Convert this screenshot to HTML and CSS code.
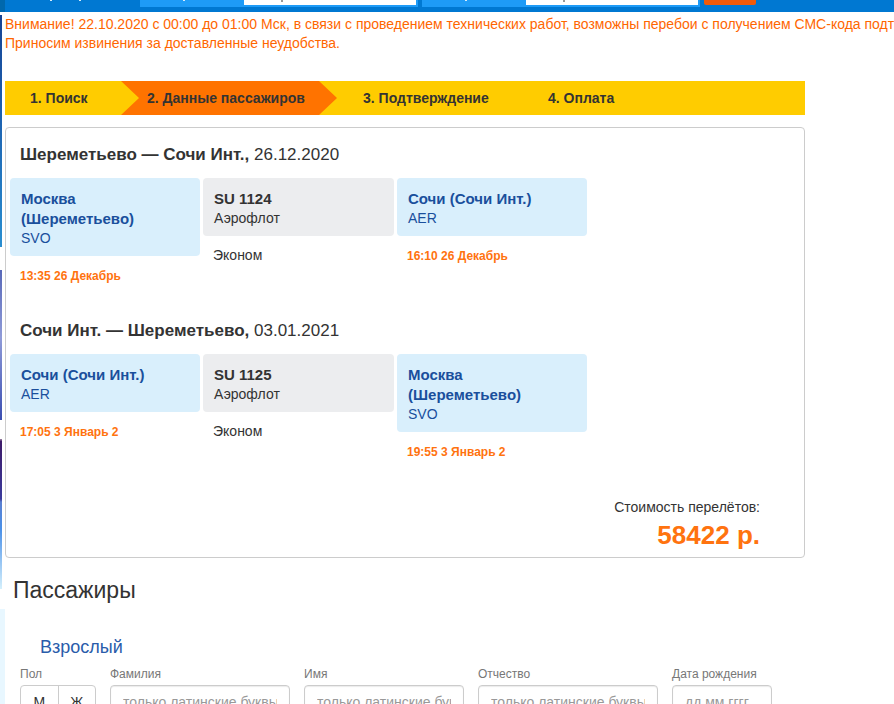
FILE: index.html
```html
<!DOCTYPE html>
<html lang="ru">
<head>
<meta charset="utf-8">
<title>Данные пассажиров</title>
<link rel="stylesheet" href="styles.css">
</head>
<body>
<header class="topbar">
  <div class="topbar-brand"><i class="mark"></i><i class="mark"></i></div>
  <div class="field"><span class="field-label"><i class="mark"></i></span><span class="field-value"><i class="mark mark-dark"></i></span></div>
  <div class="field"><span class="field-label"><i class="mark"></i></span><span class="field-value"><i class="mark mark-dark"></i></span></div>
  <span class="topbar-action"></span>
</header>
<div class="page">
  <aside class="rail">
    <div class="banner banner-sky"></div>
    <div class="banner banner-violet"></div>
    <div class="banner banner-night"></div>
    <div class="rail-end"></div>
  </aside>
  <main class="content">
    <p class="notice">Внимание! 22.10.2020 с 00:00 до 01:00 Мск, в связи с проведением технических работ, возможны перебои с получением СМС-кода подт<br>Приносим извинения за доставленные неудобства.</p>
    <ol class="steps">
      <li class="step step-search">1. Поиск</li>
      <li class="step step-current" aria-current="step">2. Данные пассажиров</li>
      <li class="step step-confirm">3. Подтверждение</li>
      <li class="step">4. Оплата</li>
    </ol>
    <section class="trip">
      <article class="flight">
        <h2 class="route"><b>Шереметьево — Сочи Инт.,</b> 26.12.2020</h2>
        <div class="legs">
          <div class="leg">
            <div class="tile"><b>Москва (Шереметьево)</b><span>SVO</span></div>
            <p class="time">13:35 26 Декабрь</p>
          </div>
          <div class="leg">
            <div class="tile tile-carrier"><b>SU 1124</b><span>Аэрофлот</span></div>
            <p class="cabin">Эконом</p>
          </div>
          <div class="leg">
            <div class="tile"><b>Сочи (Сочи Инт.)</b><span>AER</span></div>
            <p class="time">16:10 26 Декабрь</p>
          </div>
        </div>
      </article>
      <article class="flight">
        <h2 class="route"><b>Сочи Инт. — Шереметьево,</b> 03.01.2021</h2>
        <div class="legs">
          <div class="leg">
            <div class="tile"><b>Сочи (Сочи Инт.)</b><span>AER</span></div>
            <p class="time">17:05 3 Январь 2</p>
          </div>
          <div class="leg">
            <div class="tile tile-carrier"><b>SU 1125</b><span>Аэрофлот</span></div>
            <p class="cabin">Эконом</p>
          </div>
          <div class="leg">
            <div class="tile"><b>Москва (Шереметьево)</b><span>SVO</span></div>
            <p class="time">19:55 3 Январь 2</p>
          </div>
        </div>
      </article>
      <div class="total">
        <p>Стоимость перелётов:</p>
        <p class="price">58422 р.</p>
      </div>
    </section>
    <form class="passengers">
      <h2 class="passengers-title">Пассажиры</h2>
      <h3 class="passenger-type">Взрослый</h3>
      <div class="form-row">
        <div class="form-field gender" role="group" aria-labelledby="gender">
          <span class="caption" id="gender">Пол</span>
          <div class="toggle"><button type="button">М</button><button type="button">Ж</button></div>
        </div>
        <div class="form-field wide">
          <label class="caption" for="surname">Фамилия</label>
          <input id="surname" type="text" placeholder="только латинские буквы">
        </div>
        <div class="form-field medium">
          <label class="caption" for="name">Имя</label>
          <input id="name" type="text" placeholder="только латинские буквы">
        </div>
        <div class="form-field wide">
          <label class="caption" for="patronymic">Отчество</label>
          <input id="patronymic" type="text" placeholder="только латинские буквы">
        </div>
        <div class="form-field date">
          <label class="caption" for="birth">Дата рождения</label>
          <input id="birth" type="text" placeholder="дд.мм.гггг">
        </div>
      </div>
    </form>
  </main>
</div>
</body>
</html>
```
FILE: styles.css
```css
* {
  box-sizing: border-box;
}

html {
  overflow: hidden;
}

body {
  margin: 0;
  height: 100vh;
  overflow: hidden;
  display: flex;
  flex-direction: column;
  background: #fff;
  color: #333;
  font: 14px/20px "Liberation Sans", Arial, sans-serif;
}

h2, h3, p, ol {
  margin: 0;
  padding: 0;
  font-weight: normal;
}

/* Search bar, scrolled almost out of view */
.topbar {
  flex: none;
  display: flex;
  align-items: flex-start;
  gap: 4px;
  height: 12px;
  background: linear-gradient(90deg, #0068ad 5px, #0078d2 5px);
}

.topbar-brand {
  display: flex;
  gap: 27px;
  width: 136px;
  padding-left: 50px;
}

.mark {
  width: 2px;
  height: 1px;
  background: #d5ecfb;
}

.mark-dark {
  height: 2px;
  background: #999;
}

.field {
  display: flex;
  height: 7px;
  padding-right: 2px;
  background: #1e9bf7;
}

.field-label {
  display: flex;
  width: 104px;
  padding-left: 43px;
}

.field-value {
  display: flex;
  width: 172px;
  height: 5px;
  padding-left: 37px;
  background: #fff;
}

.topbar-action {
  width: 52px;
  height: 5px;
  background: #f05a0a;
  border-radius: 0 0 2px 2px;
}

.page {
  flex: 1;
  min-height: 0;
  display: grid;
  grid-template-columns: 5px minmax(0, 1fr);
}

.rail {
  display: flex;
  flex-direction: column;
  padding-top: 3px;
}

.banner {
  flex: none;
  width: 2px;
  height: 150px;
  margin-bottom: 19px;
}

.banner-sky {
  height: 232px;
  margin-bottom: 23px;
  background: linear-gradient(#174494, #1c5fae 40%, #2a8ed0);
}

.banner-violet {
  background: linear-gradient(#5868b8, #8f9bd8 45%, #3a4db0);
}

.banner-night {
  margin-bottom: 20px;
  background: linear-gradient(#8d7398 1px, #3d1a68 2px, #3a3a9c 40%, #5a7fd0 42%, #4a90e8 60%, #d5f0fc);
}

.rail-end {
  flex: 1;
  background: #e8f7ff;
}

.content {
  min-width: 0;
}

.notice {
  overflow: hidden;
  padding-top: 3px;
  color: #ff6600;
  line-height: 19px;
  white-space: nowrap;
}

.steps {
  display: flex;
  max-width: 800px;
  height: 34px;
  margin-top: 28px;
  background: #ffcc00;
  font-weight: bold;
  line-height: 34px;
  list-style: none;
}

.step-search {
  width: 116px;
  padding-left: 25px;
}

.step-current {
  width: 216px;
  padding-left: 26px;
  background: #ff7300;
  clip-path: polygon(0 0, 198px 0, 100% 50%, 198px 100%, 0 100%, 18px 50%);
}

.step-confirm {
  width: 211px;
  padding-left: 26px;
}

.trip {
  max-width: 800px;
  margin-top: 12px;
  padding: 17px 4px 6px;
  border: 1px solid #ccc;
  border-radius: 4px;
}

.flight {
  margin-bottom: 35px;
}

.route {
  padding-left: 10px;
  font-size: 17px;
}

.legs {
  display: grid;
  grid-template-columns: 190px 191px 190px;
  gap: 3px;
  margin-top: 13px;
}

.tile {
  padding: 11px 11px 9px;
  border-radius: 4px;
  background: #d9effc;
  color: #1a4f9c;
}

.tile b {
  display: block;
  font-size: 15px;
}

.tile span {
  display: block;
  line-height: 18px;
}

.tile-carrier {
  background: #ecedef;
  color: #333;
}

.time {
  padding: 10px 10px 0;
  color: #ff730f;
  font-size: 12px;
  font-weight: bold;
}

.cabin {
  padding: 9px 10px 0;
}

.total {
  padding-right: 40px;
  text-align: right;
}

.price {
  margin-top: 2px;
  color: #ff730f;
  font-size: 26px;
  font-weight: bold;
  line-height: 32px;
}

.passengers-title {
  margin-top: 16px;
  padding-left: 8px;
  font-size: 23px;
  line-height: 32px;
}

.passenger-type {
  margin-top: 30px;
  padding-left: 35px;
  color: #2a5caa;
  font-size: 18px;
  line-height: 22px;
}

.form-row {
  display: flex;
  gap: 14px;
  margin-top: 6px;
  padding-left: 15px;
}

.caption {
  display: block;
  margin-bottom: 1px;
  color: #777;
  font-size: 12px;
}

.form-field input {
  width: 100%;
  height: 34px;
  padding: 0 12px;
  border: 1px solid #ccc;
  border-radius: 4px;
  box-shadow: inset 0 1px 1px rgba(0, 0, 0, 0.08);
  color: #555;
  font: inherit;
}

.form-field input::placeholder {
  color: #999;
}

.gender {
  width: 76px;
}

.wide {
  width: 180px;
}

.medium {
  width: 160px;
}

.date {
  width: 100px;
}

.toggle {
  display: flex;
  height: 34px;
  border: 1px solid #ccc;
  border-radius: 4px;
}

.toggle button {
  flex: 1;
  padding: 0;
  border: 0;
  background: none;
  color: #333;
  font: inherit;
}

.toggle button + button {
  border-left: 1px solid #ccc;
}
```
